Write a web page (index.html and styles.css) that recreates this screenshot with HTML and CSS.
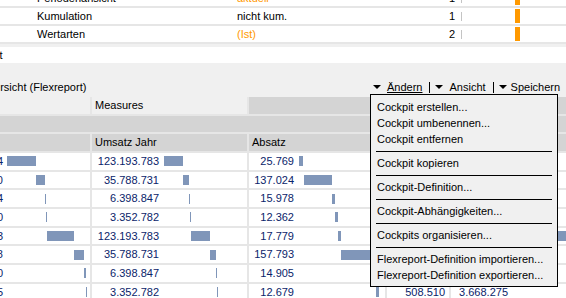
FILE: index.html
```html
<!DOCTYPE html>
<html lang="de">
<head>
<meta charset="utf-8">
<title>Flexreport</title>
<link rel="stylesheet" href="styles.css">
</head>
<body>
<div class="page">
  <div class="props">
    <div class="prop-row first">
      <span class="prop-label">Periodenansicht</span>
      <span class="prop-value accent">aktuell</span>
      <span class="prop-num">1</span>
      <span class="prop-tick"></span>
      <span class="prop-bar"></span>
    </div>
    <div class="prop-row">
      <span class="prop-label">Kumulation</span>
      <span class="prop-value">nicht kum.</span>
      <span class="prop-num">1</span>
      <span class="prop-tick"></span>
      <span class="prop-bar"></span>
    </div>
    <div class="prop-row">
      <span class="prop-label">Wertarten</span>
      <span class="prop-value accent">(Ist)</span>
      <span class="prop-num">2</span>
      <span class="prop-tick"></span>
      <span class="prop-bar"></span>
    </div>
  </div>
  <div class="props-end"></div>
  <div class="strip"><span class="strip-text">Cockpit</span></div>
  <div class="panel">
    <div class="panel-row">
      <div class="panel-title">Übersicht (Flexreport)</div>
      <div class="toolbar">
        <span class="caret"></span><span class="tb-link active">Ändern</span>
        <span class="tb-sep"></span>
        <span class="caret"></span><span class="tb-link">Ansicht</span>
        <span class="tb-sep"></span>
        <span class="caret last"></span><span class="tb-link">Speichern</span>
      </div>
    </div>
  </div>

  <div class="grid">
    <div class="h-light"></div>
    <div class="h-light">Measures</div>
    <div class="h-dark span-rest"></div>

    <div class="h-dark span-all"></div>

    <div class="h-dark"></div>
    <div class="h-dark">Umsatz Jahr</div>
    <div class="h-dark">Absatz</div>
    <div class="h-dark"></div>
    <div class="h-dark"></div>

    <!-- row 1 -->
    <div class="cell c0"><span class="num">187.654.324</span><span class="bars"><span class="bar" style="margin-left:0;width:29px"></span></span></div>
    <div class="cell c1"><span class="num">123.193.783</span><span class="bars"><span class="bar" style="margin-left:0;width:19px"></span></span></div>
    <div class="cell c2"><span class="num">25.769</span><span class="bars"><span class="bar" style="margin-left:0;width:4px"></span></span></div>
    <div class="cell c3"><span class="num"></span></div>
    <div class="cell c4"><span class="num"></span></div>
    <!-- row 2 -->
    <div class="cell c0"><span class="num">54.520.510</span><span class="bars"><span class="bar" style="margin-left:29px;width:9px"></span></span></div>
    <div class="cell c1"><span class="num">35.788.731</span><span class="bars"><span class="bar" style="margin-left:19px;width:6px"></span></span></div>
    <div class="cell c2"><span class="num">137.024</span><span class="bars"><span class="bar" style="margin-left:5px;width:28px"></span></span></div>
    <div class="cell c3"><span class="num"></span></div>
    <div class="cell c4"><span class="num"></span></div>
    <!-- row 3 -->
    <div class="cell c0"><span class="num">9.748.334</span><span class="bars"><span class="bar" style="margin-left:38px;width:1px"></span></span></div>
    <div class="cell c1"><span class="num">6.398.847</span><span class="bars"><span class="bar" style="margin-left:25px;width:1px"></span></span></div>
    <div class="cell c2"><span class="num">15.978</span><span class="bars"><span class="bar" style="margin-left:33px;width:3px"></span></span></div>
    <div class="cell c3"><span class="num"></span></div>
    <div class="cell c4"><span class="num"></span></div>
    <!-- row 4 -->
    <div class="cell c0"><span class="num">5.107.030</span><span class="bars"><span class="bar" style="margin-left:39px;width:1px"></span></span></div>
    <div class="cell c1"><span class="num">3.352.782</span><span class="bars"><span class="bar" style="margin-left:26px;width:1px"></span></span></div>
    <div class="cell c2"><span class="num">12.362</span><span class="bars"><span class="bar" style="margin-left:36px;width:3px"></span></span></div>
    <div class="cell c3"><span class="num"></span></div>
    <div class="cell c4"><span class="num"></span></div>
    <!-- row 5 -->
    <div class="cell c0"><span class="num">187.654.323</span><span class="bars"><span class="bar" style="margin-left:40px;width:27px"></span></span></div>
    <div class="cell c1"><span class="num">123.193.783</span><span class="bars"><span class="bar" style="margin-left:27px;width:19px"></span></span></div>
    <div class="cell c2"><span class="num">17.779</span><span class="bars"><span class="bar" style="margin-left:39px;width:3px"></span></span></div>
    <div class="cell c3"><span class="num"></span></div>
    <div class="cell c4"><span class="num"></span><span class="bars"><span class="bar" style="margin-left:45px;width:20px"></span></span></div>
    <!-- row 6 -->
    <div class="cell c0"><span class="num">54.520.518</span><span class="bars"><span class="bar" style="margin-left:67px;width:10px"></span></span></div>
    <div class="cell c1"><span class="num">35.788.731</span><span class="bars"><span class="bar" style="margin-left:46px;width:6px"></span></span></div>
    <div class="cell c2"><span class="num">157.793</span><span class="bars"><span class="bar" style="margin-left:42px;width:33px"></span></span></div>
    <div class="cell c3"><span class="num"></span></div>
    <div class="cell c4"><span class="num"></span></div>
    <!-- row 7 -->
    <div class="cell c0"><span class="num">9.748.330</span><span class="bars"><span class="bar" style="margin-left:77px;width:2px"></span></span></div>
    <div class="cell c1"><span class="num">6.398.847</span><span class="bars"><span class="bar" style="margin-left:52px;width:1px"></span></span></div>
    <div class="cell c2"><span class="num">14.905</span><span class="bars"><span class="bar" style="margin-left:75px;width:2px"></span></span></div>
    <div class="cell c3"><span class="num"></span></div>
    <div class="cell c4"><span class="num"></span></div>
    <!-- row 8 -->
    <div class="cell c0"><span class="num">5.107.035</span><span class="bars"><span class="bar" style="margin-left:79px;width:1px"></span></span></div>
    <div class="cell c1"><span class="num">3.352.782</span><span class="bars"><span class="bar" style="margin-left:53px;width:1px"></span></span></div>
    <div class="cell c2"><span class="num">12.679</span><span class="bars"><span class="bar" style="margin-left:77px;width:3px"></span></span></div>
    <div class="cell c3"><span class="num">508.510</span></div>
    <div class="cell c4"><span class="num">3.668.275</span></div>
  </div>

  <div class="menu">
    <div class="menu-item">Cockpit erstellen...</div>
    <div class="menu-item">Cockpit umbenennen...</div>
    <div class="menu-item">Cockpit entfernen</div>
    <div class="menu-sep"></div>
    <div class="menu-item">Cockpit kopieren</div>
    <div class="menu-sep"></div>
    <div class="menu-item">Cockpit-Definition...</div>
    <div class="menu-sep"></div>
    <div class="menu-item">Cockpit-Abhängigkeiten...</div>
    <div class="menu-sep"></div>
    <div class="menu-item">Cockpits organisieren...</div>
    <div class="menu-sep"></div>
    <div class="menu-item">Flexreport-Definition importieren...</div>
    <div class="menu-item">Flexreport-Definition exportieren...</div>
  </div>
</div>
</body>
</html>
```

FILE: styles.css
```css
* { box-sizing: border-box; }

html, body {
  margin: 0;
  padding: 0;
  background: #ffffff;
}

body {
  width: 566px;
  height: 298px;
  overflow: hidden;
  font-family: "Liberation Sans", Arial, sans-serif;
  font-size: 11px;
  color: #000000;
}

.page {
  position: relative;
  width: 566px;
  height: 298px;
  overflow: hidden;
}

/* ---------- property rows ---------- */
.props {
  display: flex;
  flex-direction: column;
  gap: 2px;
  padding-bottom: 2px;
  background: #e6e6e6;
}

.prop-row {
  display: flex;
  align-items: center;
  height: 16px;
  line-height: 16px;
  background: #ffffff;
  white-space: nowrap;
}

.prop-row.first { margin-top: -10px; }

.prop-label {
  flex: none;
  width: 200px;
  margin-left: 37px;
}

.prop-value {
  flex: none;
  width: 180px;
}

.accent { color: #ff9900; }

.prop-num {
  flex: none;
  width: 38px;
  text-align: right;
}

.prop-tick {
  flex: none;
  width: 1px;
  height: 9px;
  margin-left: 6px;
  background: #c4c4c4;
}

.prop-bar {
  flex: none;
  width: 5px;
  height: 14px;
  margin-left: 53px;
  background: #ff9900;
}

.props-end {
  height: 3px;
  background: #f0f0f0;
}

.strip {
  height: 16px;
  line-height: 16px;
  background: #ffffff;
  overflow: hidden;
  white-space: nowrap;
}

.strip-text {
  display: block;
  text-indent: -34px;
}

/* ---------- panel / toolbar ---------- */
.panel {
  height: 34px;
  background: #f0f0f0;
  display: flex;
  align-items: flex-end;
  padding-bottom: 2px;
}

.panel-row {
  display: flex;
  align-items: center;
  height: 16px;
  line-height: 16px;
  width: 100%;
  white-space: nowrap;
}

.panel-title {
  flex: none;
  width: 373px;
  overflow: hidden;
  text-indent: -20px;
}

.toolbar {
  display: flex;
  align-items: center;
  flex: none;
}

.caret {
  flex: none;
  width: 0;
  height: 0;
  border-left: 4px solid transparent;
  border-right: 4px solid transparent;
  border-top: 4px solid #000000;
  margin-right: 6px;
}

.caret.last { margin-right: 4px; }

.tb-link { flex: none; }

.tb-link.active { text-decoration: underline; }

.tb-sep {
  flex: none;
  width: 1px;
  height: 11px;
  background: #000000;
  margin: 0 5px 0 7px;
}

/* ---------- grid table ---------- */
.grid {
  display: grid;
  grid-template-columns: 90px 155px 136px 62px 115px;
  grid-auto-rows: 16.67px;
  gap: 2px;
  background: #e6e6e6;
  white-space: nowrap;
}

.h-light,
.h-dark {
  line-height: 16.67px;
  padding-left: 3px;
  overflow: hidden;
}

.h-light { background: #f0f0f0; }
.h-dark { background: #d4d4d4; }

.span-rest { grid-column: 3 / -1; }
.span-all { grid-column: 1 / -1; }

.cell {
  display: flex;
  align-items: center;
  background: #ffffff;
  line-height: 16.67px;
  overflow: hidden;
}

.num {
  flex: none;
  display: flex;
  justify-content: flex-end;
  color: #0a246a;
}

.bars {
  display: flex;
  align-items: center;
  flex: none;
  margin-left: 5px;
}

.bar {
  flex: none;
  height: 10px;
  background: #8096b9;
}

.c0 .num { width: 3px; }
.c0 .bars { margin-left: 4px; }
.c1 .num { width: 67px; }
.c2 .num { width: 45px; }
.c3 .num { width: 58px; }
.c4 .num { width: 57px; }
.c4 .bars { margin-left: 4px; }

/* ---------- dropdown menu ---------- */
.menu {
  position: absolute;
  left: 370px;
  top: 94px;
  width: 188px;
  height: 193px;
  background: #f0f0f0;
  border: 1px solid #000000;
  padding: 4px 0 3px;
  white-space: nowrap;
}

.menu-item {
  height: 16px;
  line-height: 16px;
  padding-left: 6px;
}

.menu-sep {
  height: 5px;
  margin: 0 5px 3px;
  border-bottom: 1px solid #000000;
}
```
